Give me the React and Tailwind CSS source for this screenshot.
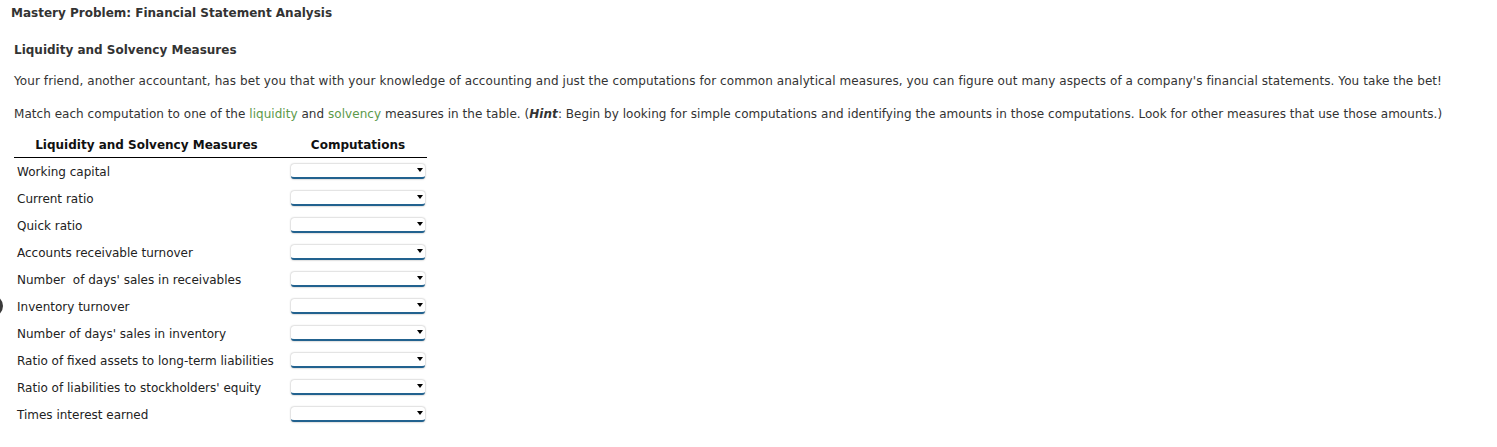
import React from "react";

const rows = [
  "Working capital",
  "Current ratio",
  "Quick ratio",
  "Accounts receivable turnover",
  "Number\u00a0 of days' sales in receivables",
  "Inventory turnover",
  "Number of days' sales in inventory",
  "Ratio of fixed assets to long-term liabilities",
  "Ratio of liabilities to stockholders' equity",
  "Times interest earned",
];

function Select() {
  return (
    <div className="relative w-[134px] h-[15px] rounded-[3px] bg-white shadow-[0_0_2px_rgba(0,0,0,0.4)] border-b-2 border-[#22628f]">
      <span className="absolute right-[2px] top-[4px] w-0 h-0 border-l-[3.5px] border-r-[3.5px] border-t-[4px] border-l-transparent border-r-transparent border-t-black" />
    </div>
  );
}

export default function App() {
  return (
    <div className="relative w-[1497px] h-[447px] bg-white text-[#333] font-['Verdana','DejaVu_Sans',sans-serif] text-[12px] overflow-hidden">
      <div className="absolute left-[-19px] top-[295px] w-[22px] h-[22px] rounded-full bg-[#3a3a3a]" />
      <div className="pl-[11px] pt-[5px] font-bold text-[12px] leading-[16px]">
        Mastery Problem: Financial Statement Analysis
      </div>
      <div className="pl-[14px] pt-[21px] font-bold text-[12px] leading-[16px]">
        Liquidity and Solvency Measures
      </div>
      <p className="pl-[14px] pt-[15px] leading-[16px] tracking-[0.08px]">
        Your friend, another accountant, has bet you that with your knowledge of accounting and just the computations for common analytical measures, you can figure out many aspects of a company's financial statements. You take the bet!
      </p>
      <p className="pl-[14px] pt-[17px] leading-[16px] tracking-[0.04px]">
        Match each computation to one of the <span className="text-[#5c9a4a]">liquidity</span> and <span className="text-[#5c9a4a]">solvency</span> measures in the table. (<b><i>Hint</i></b>: Begin by looking for simple computations and identifying the amounts in those computations. Look for other measures that use those amounts.)
      </p>
      <table className="ml-[14px] mt-[13px] border-collapse">
        <thead>
          <tr className="border-b border-black">
            <th className="w-[265px] h-[22px] font-bold text-[12px] text-[#111] text-center pb-[1px]">Liquidity and Solvency Measures</th>
            <th className="w-[148px] h-[22px] font-bold text-[12px] text-[#111] text-center pb-[1px] pl-[10px]">Computations</th>
          </tr>
        </thead>
        <tbody>
          {rows.map((r, i) => (
            <tr key={r} className={i === 0 ? "h-[28px]" : "h-[27px]"}>
              <td className={"pl-[3px] whitespace-pre text-[#222] " + (i === 0 ? "pt-[1px]" : "")}>{r}</td>
              <td className={"pl-[12px] " + (i === 0 ? "pt-[1px]" : "")}><Select /></td>
            </tr>
          ))}
        </tbody>
      </table>
    </div>
  );
}
